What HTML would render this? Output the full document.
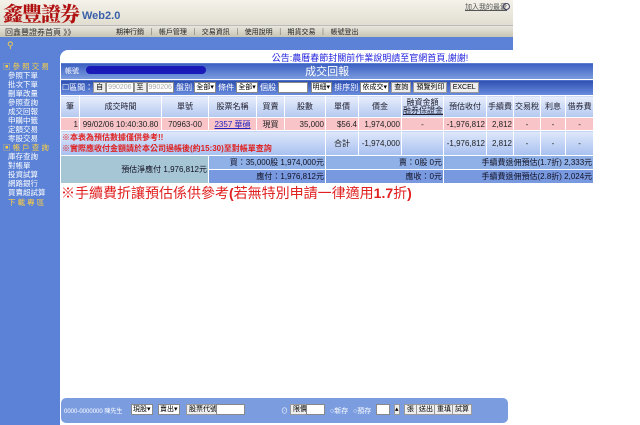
<!DOCTYPE html>
<html><head><meta charset="utf-8"><style>
*{margin:0;padding:0;box-sizing:border-box}
body{width:640px;height:425px;position:relative;overflow:hidden;background:#fff;font-family:"Liberation Sans","Noto Sans CJK TC",sans-serif;font-size:8px;color:#222}
.abs{position:absolute}
#hdr{left:0;top:0;width:513px;height:37px;background:linear-gradient(#f4f2ea,#d8d4c4)}
#logo{left:3px;top:1px;font-family:"Noto Serif CJK SC",serif;font-weight:900;font-size:20px;color:#b01010;letter-spacing:-1px;line-height:24px}
#web{left:82px;top:10px;font-size:11px;font-weight:bold;color:#3a5fa8}
#nav{left:0;top:25px;width:513px;height:12px;background:linear-gradient(#e8e6de,#c8c4b4);border-top:1px solid #bbb}
#nav .h{position:absolute;left:5px;top:1px;font-size:8px;color:#333}
#nav .m{position:absolute;left:116px;top:1px;font-size:7px;color:#222;word-spacing:2px}
#fav{left:465px;top:2px;font-size:7px;color:#555;text-decoration:underline}
#blue{left:0;top:37px;width:513px;height:388px;background:#5b82d6}
#side{left:0;top:60px;width:60px;height:365px;background:#5b82d6}
#side div{position:absolute;left:8px;font-size:7.5px;color:#fff;line-height:9px}
#side .y{color:#ffd040;left:3px}
#panel{left:60px;top:50px;width:453px;height:375px;background:#fff;border-radius:8px 0 0 0}
#notice{left:200px;top:51px;width:340px;text-align:center;color:#2222dd;font-size:9px}
#tbl{left:60px;top:62px;width:533px;border-collapse:collapse;table-layout:fixed}
#tbl td{border:1px solid #fff;text-align:center;font-size:8px;padding:0 1px;white-space:nowrap;overflow:hidden}
.title td{background:linear-gradient(#3a5fc0,#7d9de0);color:#fff;height:15px}
.filt td{background:linear-gradient(#2d4fb0,#6b8ee0);color:#fff;height:16px;text-align:left!important}
.hd td{background:linear-gradient(#e8eefc,#b4c8f0);height:22px;color:#223}
.dt td{background:#f8c4c8;height:13px}
.nt td{background:linear-gradient(#dfe8fa,#a8c0f0);height:25px}
.sm td{height:14px;text-align:right!important;color:#112}
.inp{display:inline-block;background:#fff;border:1px solid #888;color:#aaa;height:11px;vertical-align:middle;font-size:7px;line-height:9px;padding:0 1px}
.btn{display:inline-block;background:#eee;border:1px solid #999;color:#000;height:11px;vertical-align:middle;font-size:7px;line-height:9px;padding:0 2px}
#red{left:61px;top:183px;font-size:14px;color:#e02020}
#bar{left:61px;top:398px;width:447px;height:25px;background:#7b9de0;border-radius:5px}
#bar span{position:absolute;top:8px;font-size:7px;color:#fff}
#bar span.inp,#bar span.btn{color:#000;top:6px}
</style></head><body>
<div id="hdr" class="abs"></div>
<div id="logo" class="abs">鑫豐證券</div>
<div id="web" class="abs">Web2.0</div>
<div id="fav" class="abs">加入我的最愛</div>
<div class="abs" style="left:503px;top:3px;width:7px;height:7px;border:1.5px solid #446;border-radius:50%"></div>
<div id="nav" class="abs"><span class="h">回鑫豐證券首頁 》》</span><span class="m">期神行銷 ｜ 帳戶管理 ｜ 交易資訊 ｜ 使用說明 ｜ 期貨交易 ｜ 帳號登出</span></div>
<div id="blue" class="abs"></div>
<div class="abs" style="left:7px;top:40px;color:#ffd040;font-size:9px">⚲</div>
<div id="side" class="abs">
<div class="y" style="top:2px">▣ 參 照 交 易</div>
<div style="top:11px">參照下單</div><div style="top:20px">批次下單</div><div style="top:29px">刪單改量</div><div style="top:38px">參照查詢</div><div style="top:47px">成交回報</div><div style="top:56px">申購中籤</div><div style="top:65px">定額交易</div><div style="top:74px">零股交易</div>
<div class="y" style="top:83px">▣ 帳 戶 查 詢</div>
<div style="top:92px">庫存查詢</div><div style="top:101px">對帳單</div><div style="top:110px">投資試算</div><div style="top:119px">網路銀行</div><div style="top:128px">買賣超試算</div>
<div style="top:138px;color:#ffd040">下 載 專 區</div>
</div>
<div id="panel" class="abs"></div>
<div id="notice" class="abs">公告:農曆春節封關前作業說明請至官網首頁,謝謝!</div>
<table id="tbl" class="abs">
<colgroup><col style="width:19px"><col style="width:82px"><col style="width:47px"><col style="width:48px"><col style="width:28px"><col style="width:41px"><col style="width:33px"><col style="width:43px"><col style="width:42px"><col style="width:43px"><col style="width:27px"><col style="width:27px"><col style="width:25px"><col style="width:28px"></colgroup>
<tr class="title"><td colspan="14" style="position:relative;font-size:11px"><span style="position:absolute;left:4px;top:3px;font-size:7px">帳號</span><span style="position:absolute;left:25px;top:3px;width:120px;height:8px;background:#1a1ab8;border-radius:4px"></span>成交回報</td></tr>
<tr class="filt"><td colspan="14" style="font-size:8px">☐區間：<span class="btn">自</span><span class="inp">990206</span><span class="btn">至</span><span class="inp">990206</span> 盤別 <span class="inp" style="color:#000">全部▾</span> 條件 <span class="inp" style="color:#000">全部▾</span> 個股 <span class="inp" style="width:30px"></span> <span class="inp" style="color:#000">明細▾</span> 排序別 <span class="inp" style="color:#000">依成交▾</span> <span class="btn">查詢</span> <span class="btn">預覽列印</span> <span class="btn">EXCEL</span></td></tr>
<tr class="hd"><td>筆</td><td>成交時間</td><td>單號</td><td>股票名稱</td><td>買賣</td><td>股數</td><td>單價</td><td>價金</td><td style="line-height:8px">融資金額<br><u>融券保證金</u></td><td>預估收付</td><td>手續費</td><td>交易稅</td><td>利息</td><td>借券費</td></tr>
<tr class="dt"><td style="text-align:right">1</td><td>99/02/06 10:40:30.80</td><td>70963-00</td><td><u style="color:#2020c0">2357 華碩</u></td><td>現買</td><td style="text-align:right">35,000</td><td style="text-align:right">$56.4</td><td style="text-align:right">1,974,000</td><td>-</td><td style="text-align:right">-1,976,812</td><td style="text-align:right">2,812</td><td>-</td><td>-</td><td>-</td></tr>
<tr class="nt"><td colspan="6" style="text-align:left;color:#e02020;font-weight:bold;line-height:11px">※本表為預估數據僅供參考!!<br>※實際應收付金額請於本公司過帳後(約15:30)至對帳單查詢</td><td>合計</td><td style="text-align:right">-1,974,000</td><td></td><td style="text-align:right">-1,976,812</td><td style="text-align:right">2,812</td><td>-</td><td>-</td><td>-</td></tr>
<tr class="sm"><td colspan="3" rowspan="2" style="background:#a6c6d6">預估淨應付 1,976,812元</td><td colspan="3" style="background:#90b0e8">買：35,000股 1,974,000元</td><td colspan="3" style="background:#90b0e8">賣：0股 0元</td><td colspan="5" style="background:#90b0e8">手續費退佣預估(1.7折) 2,333元</td></tr>
<tr class="sm"><td colspan="3" style="background:#7898e0">應付：1,976,812元</td><td colspan="3" style="background:#7898e0">應收：0元</td><td colspan="5" style="background:#7898e0">手續費退佣預估(2.8折) 2,024元</td></tr>
</table>
<div id="red" class="abs">※手續費折讓預估係供參考<b>(</b>若無特別申請一律適用<b>1.7</b>折<b>)</b></div>
<div id="bar" class="abs">
<span style="left:3px;font-size:6px">0000-0000000 陳先生</span>
<span style="left:70px" class="inp">現股▾</span><span style="left:97px" class="inp">賣出▾</span>
<span style="left:125px" class="btn">股票代號</span><span style="left:155px;width:29px" class="inp"></span>
<span style="left:220px">⊙</span><span style="left:229px" class="btn">限價</span><span style="left:245px;width:19px" class="inp"></span>
<span style="left:269px">○新存</span><span style="left:292px">○預存</span><span style="left:315px;width:14px" class="inp"></span>
<span style="left:333px;padding:0" class="btn">▴</span>
<span style="left:343px" class="btn">張</span><span style="left:355px" class="btn">送出</span><span style="left:373px" class="btn">重填</span><span style="left:391px" class="btn">試算</span>
</div>
</body></html>
